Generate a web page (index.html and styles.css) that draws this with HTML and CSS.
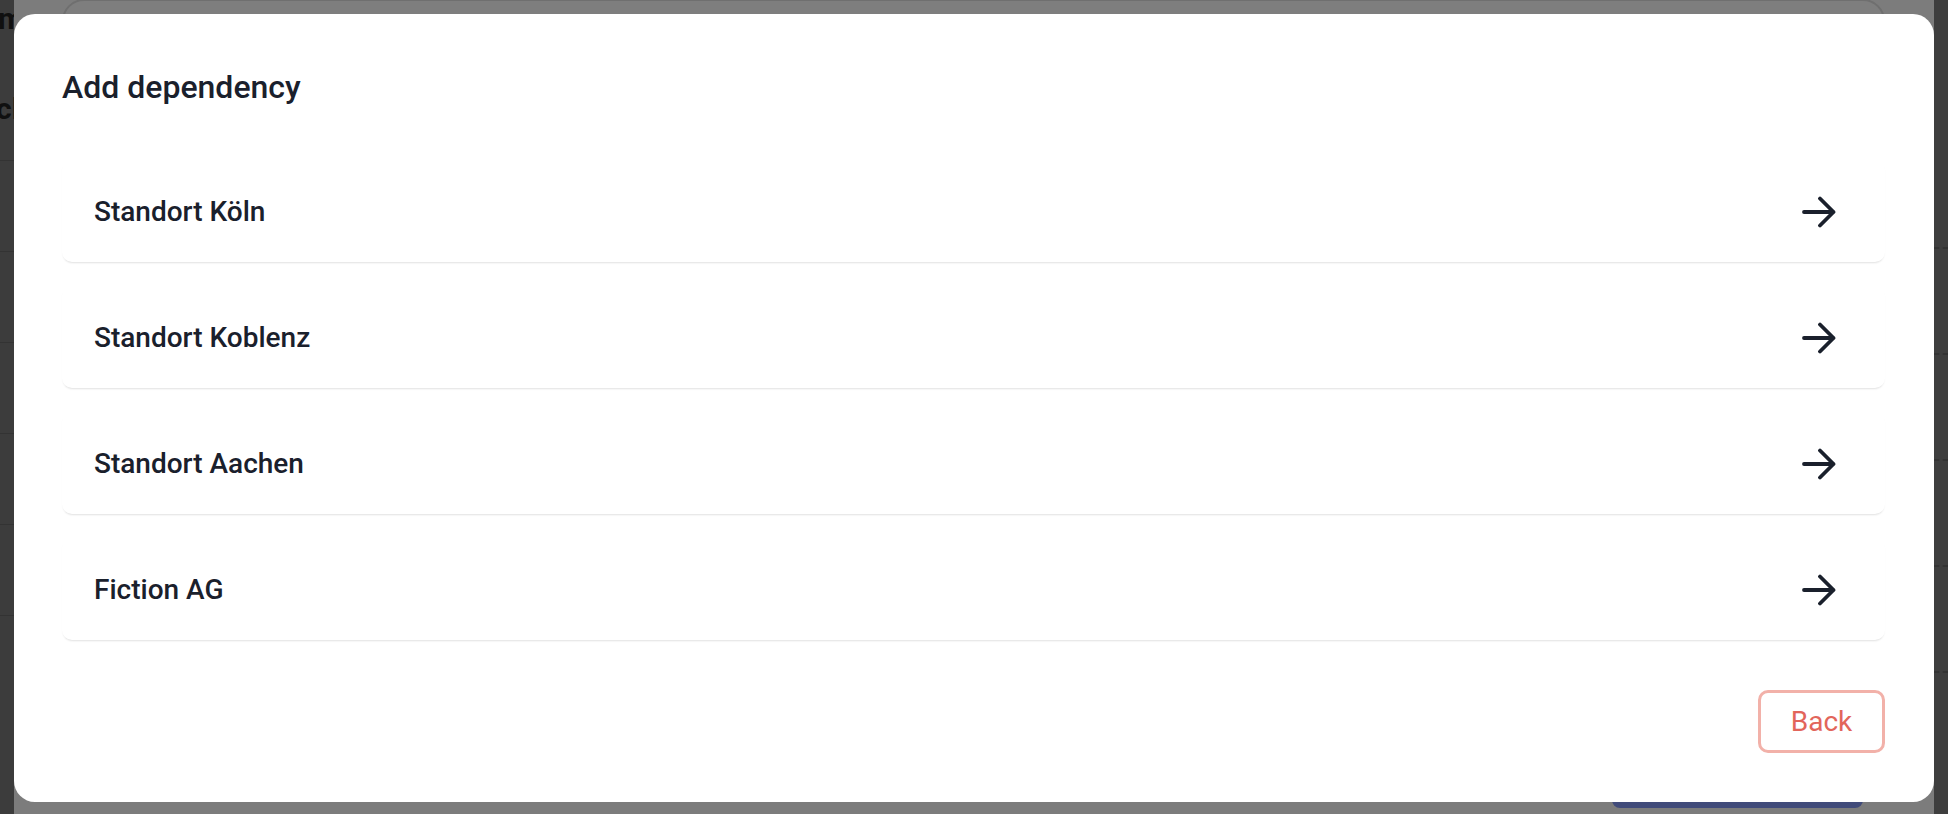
FILE: index.html
```html
<!DOCTYPE html>
<html lang="en">
<head>
<meta charset="utf-8">
<title>Add dependency</title>
<link rel="stylesheet" href="styles.css">
</head>
<body>
<div class="page">
  <div class="side side-left">
    <div class="side-text">m</div>
    <div class="side-text side-text-2">cl</div>
    <div class="side-rows">
      <div class="side-row"></div><div class="side-row"></div><div class="side-row"></div>
      <div class="side-row"></div><div class="side-row"></div><div class="side-row"></div>
    </div>
  </div>
  <div class="page-main">
    <div class="page-card"></div>
    <div class="page-footer"><div class="page-button"></div></div>
  </div>
  <div class="side side-right">
    <div class="side-dash"></div><div class="side-dash"></div><div class="side-dash"></div>
    <div class="side-dash"></div><div class="side-dash"></div>
  </div>
</div>

<div class="modal" role="dialog" aria-labelledby="modal-title">
  <h2 class="modal-title" id="modal-title">Add dependency</h2>
  <div class="option-list">
    <div class="option">
      <span class="option-label">Standort Köln</span>
      <svg class="option-arrow" viewBox="0 0 34 32" aria-hidden="true"><path d="M2 16H31.5M18 2.5L31.5 16L18 29.5"/></svg>
    </div>
    <div class="option">
      <span class="option-label">Standort Koblenz</span>
      <svg class="option-arrow" viewBox="0 0 34 32" aria-hidden="true"><path d="M2 16H31.5M18 2.5L31.5 16L18 29.5"/></svg>
    </div>
    <div class="option">
      <span class="option-label">Standort Aachen</span>
      <svg class="option-arrow" viewBox="0 0 34 32" aria-hidden="true"><path d="M2 16H31.5M18 2.5L31.5 16L18 29.5"/></svg>
    </div>
    <div class="option">
      <span class="option-label">Fiction AG</span>
      <svg class="option-arrow" viewBox="0 0 34 32" aria-hidden="true"><path d="M2 16H31.5M18 2.5L31.5 16L18 29.5"/></svg>
    </div>
  </div>
  <div class="modal-footer">
    <button class="btn-back" type="button">Back</button>
  </div>
</div>
</body>
</html>
```

FILE: styles.css
```css
* { box-sizing: border-box; }

html, body {
  margin: 0;
  padding: 0;
  width: 1948px;
  height: 814px;
  overflow: hidden;
}

body {
  background: #7c7c7c;
  font-family: Roboto, "Liberation Sans", Arial, sans-serif;
  color: #1a202c;
}

/* background page (dimmed by the overlay) */
.page {
  display: flex;
  height: 814px;
}

.side {
  width: 14px;
  flex: none;
  background: #3e3e3e;
  overflow: hidden;
  display: flex;
  flex-direction: column;
}

.side-text {
  font-size: 30px;
  font-weight: 700;
  color: #101010;
  line-height: 30px;
  margin-top: 4px;
  margin-left: -2px;
  white-space: nowrap;
}

.side-text-2 {
  margin-top: 60px;
  margin-left: -4px;
}

.side-left {
  background: #3c3c3c;
}

.side-rows {
  margin-top: 36px;
  display: flex;
  flex-direction: column;
}

.side-row {
  height: 91px;
  border-top: 1px solid #333333;
}

.side-right {
  width: 14px;
  padding-top: 247px;
  gap: 104px;
}

.side-dash {
  height: 2px;
  border-top: 2px dashed #333333;
}

.page-main {
  flex: 1;
  display: flex;
  flex-direction: column;
  justify-content: space-between;
}

.page-card {
  margin: -1px 49px 0 48px;
  height: 120px;
  border: 2px solid #6f6f6f;
  border-radius: 22px;
  background: #7e7e7e;
}

.page-footer {
  display: flex;
  justify-content: flex-end;
  padding-right: 71px;
}

.page-button {
  width: 251px;
  height: 40px;
  margin-bottom: 6px;
  background: #414b7a;
  border-radius: 8px;
}

/* modal */
.modal {
  position: fixed;
  left: 14px;
  top: 14px;
  width: 1920px;
  height: 788px;
  background: #ffffff;
  border-radius: 21px;
  padding: 55px 49px 49px 48px;
  display: flex;
  flex-direction: column;
}

.modal-title {
  margin: 0;
  font-size: 32px;
  line-height: 37px;
  font-weight: 500;
  color: #1a202c;
}

.option-list {
  margin-top: 54px;
  display: flex;
  flex-direction: column;
  gap: 24px;
}

.option {
  height: 102px;
  display: flex;
  align-items: center;
  justify-content: space-between;
  padding: 0 49px 0 32px;
  background: #ffffff;
  border-radius: 10px;
  box-shadow: 0 2px 2px -1px rgba(0, 0, 0, 0.12);
}

.option-label {
  font-size: 28px;
  font-weight: 500;
  color: #1a202c;
}

.option-arrow {
  width: 34px;
  height: 32px;
  fill: none;
  stroke: #1a202c;
  stroke-width: 3.8;
  stroke-linecap: round;
  stroke-linejoin: round;
  margin-top: 2px;
}

.modal-footer {
  margin-top: 50px;
  display: flex;
  justify-content: flex-end;
}

.btn-back {
  width: 127px;
  height: 63px;
  border: 3px solid #f2b1a9;
  border-radius: 10px;
  background: #ffffff;
  color: #e2655b;
  font-family: Roboto, "Liberation Sans", Arial, sans-serif;
  font-size: 28px;
  font-weight: 400;
  padding: 0;
}
```
